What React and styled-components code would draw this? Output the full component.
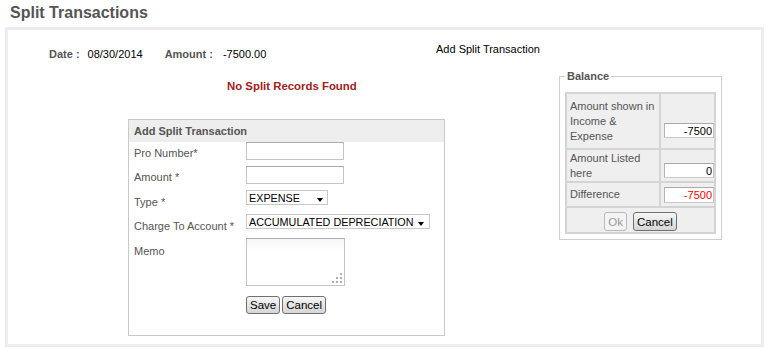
import React from "react";
import styled, { createGlobalStyle } from "styled-components";

const Global = createGlobalStyle`
  html, body { margin: 0; padding: 0; background: #fff; }
  body {
    font-family: "Liberation Sans", Arial, sans-serif;
    font-size: 11px;
    color: #000;
  }
  * { box-sizing: border-box; }
`;

const Page = styled.div`
  width: 767px;
  height: 356px;
  padding: 0 3px 0 5px;
`;

const Title = styled.h1`
  margin: 0 0 5px 0;
  padding: 4px 0 0 5px;
  font-size: 16px;
  line-height: 18px;
  font-weight: bold;
  color: #555;
`;

const Panel = styled.div`
  width: 759px;
  height: 320px;
  border: 3px solid #ededed;
  display: flex;
  flex-direction: column;
`;

const TopRow = styled.div`
  display: flex;
  height: 40px;
`;

const InfoLine = styled.div`
  flex: 0 0 428px;
  padding: 18px 0 0 41px;
  display: flex;
  line-height: 13px;
`;

const InfoLabel = styled.span`
  font-weight: bold;
  color: #555;
  margin-left: ${(p) => p.$gap || 0}px;
`;

const InfoValue = styled.span`
  color: #000;
  margin-left: ${(p) => p.$gap || 0}px;
`;

const AddLink = styled.a`
  margin-top: 13px;
  height: 13px;
  line-height: 13px;
  color: #000;
  text-decoration: none;
  cursor: pointer;
`;

const Body = styled.div`
  display: flex;
  flex: 1;
`;

const Main = styled.div`
  flex: 0 0 551px;
`;

const NoRecords = styled.div`
  margin-top: 10px;
  padding-left: 219px;
  font-weight: bold;
  font-size: 11.4px;
  color: #a02020;
  line-height: 13px;
`;

const FormBox = styled.div`
  margin: 26px 0 0 120px;
  width: 317px;
  height: 217px;
  border: 1px solid #c9c9c9;
`;

const FormHeader = styled.div`
  height: 22px;
  line-height: 22px;
  padding-left: 5px;
  background: #eeeeee;
  font-weight: bold;
  color: #555;
`;

const FormBody = styled.div`
  padding-left: 5px;
`;

const FieldRow = styled.div`
  display: grid;
  grid-template-columns: 112px auto;
  align-items: start;
  height: ${(p) => p.$h}px;
`;

const Label = styled.label`
  color: #555;
  line-height: 13px;
  padding-top: ${(p) => p.$pt || 5}px;
`;

const TextInput = styled.input`
  width: 98px;
  height: ${(p) => p.$h || 18}px;
  border: 1px solid #c4c4c4;
  border-top-color: #aaaaaa;
  background: #fff;
  padding: 0 2px;
  font-family: inherit;
  font-size: 11px;
  outline: none;
`;

const SelectWrap = styled.div`
  position: relative;
  width: ${(p) => p.$w}px;
  height: 15px;
  &::after {
    content: "";
    position: absolute;
    right: ${(p) => p.$arrowRight}px;
    bottom: 3px;
    border-left: 3.5px solid transparent;
    border-right: 3.5px solid transparent;
    border-top: 4px solid #000;
    pointer-events: none;
  }
`;

const Select = styled.select`
  appearance: none;
  -webkit-appearance: none;
  width: 100%;
  height: 15px;
  border: 1px solid #c8c8c8;
  border-radius: 0;
  background: #fff;
  padding: 0 0 0 2px;
  font-family: "Liberation Sans", Arial, sans-serif;
  font-size: 10.8px;
  line-height: 12px;
  color: #000;
  outline: none;
`;

const MemoWrap = styled.div`
  position: relative;
  width: 99px;
  height: 48px;
`;

const Memo = styled.textarea`
  width: 99px;
  height: 48px;
  resize: none;
  border: 1px solid #c4c4c4;
  border-top-color: #aaaaaa;
  background: linear-gradient(#f6f6f6, #fff 12px);
  outline: none;
  font-family: inherit;
`;

const Grip = styled.svg`
  position: absolute;
  right: 2px;
  bottom: 2px;
`;

const ButtonRow = styled.div`
  display: flex;
  gap: 2px;
  padding-left: ${(p) => p.$pl || 0}px;
`;

const Button = styled.button`
  height: ${(p) => p.$h || 18}px;
  padding: 0 3px;
  border: 1px solid ${(p) => (p.disabled ? "#b9b9b9" : "#6f6f6f")};
  border-radius: 3px;
  background: ${(p) =>
    p.disabled ? "#f4f4f4" : "linear-gradient(#f7f7f7, #e2e2e2 60%, #d6d6d6)"};
  color: ${(p) => (p.disabled ? "#9a9a9a" : "#000")};
  font-family: "Liberation Sans", Arial, sans-serif;
  font-size: 11.5px;
  line-height: 14px;
  cursor: pointer;
`;

const Side = styled.div`
  flex: 0 0 163px;
`;

const Fieldset = styled.fieldset`
  margin: 0;
  width: 163px;
  border: 1px solid #cfcfcf;
  padding: 9px 5px 5px 5px;
`;

const Legend = styled.legend`
  padding: 0 2px;
  font-weight: bold;
  color: #555;
  line-height: 13px;
`;

const BalTable = styled.div`
  display: grid;
  grid-template-columns: 92px 53px;
  grid-template-rows: 54px 31px 23px 24px;
  gap: 2px;
  padding: 2px;
  background: #d4d4d4;
`;

const BalLabel = styled.div`
  background: #efefef;
  color: #555;
  padding: 0 3px;
  line-height: 15px;
  display: flex;
  align-items: center;
`;

const BalValueCell = styled.div`
  background: #efefef;
  display: flex;
  align-items: flex-end;
  padding: 0 0 ${(p) => p.$mb}px 3px;
`;

const BalInput = styled.input`
  width: 50px;
  height: ${(p) => p.$h || 15}px;
  border: 1px solid #c9c9c9;
  border-top-color: #a9a9a9;
  border-left-color: #b5b5b5;
  background: #fff;
  text-align: right;
  padding: 0 1px 0 0;
  font-family: "Liberation Sans", Arial, sans-serif;
  font-size: 11px;
  color: ${(p) => (p.$neg ? "#ff0000" : "#000")};
  outline: none;
`;

const BalButtons = styled.div`
  grid-column: 1 / span 2;
  background: #efefef;
  display: flex;
  justify-content: center;
  align-items: flex-start;
  gap: 6px;
  padding-top: 4px;
`;

export default function App() {
  return (
    <>
      <Global />
      <Page>
        <Title>Split Transactions</Title>
        <Panel>
          <TopRow>
            <InfoLine>
              <InfoLabel>Date :</InfoLabel>
              <InfoValue $gap={8}>08/30/2014</InfoValue>
              <InfoLabel $gap={22}>Amount :</InfoLabel>
              <InfoValue $gap={10}>-7500.00</InfoValue>
            </InfoLine>
            <AddLink>Add Split Transaction</AddLink>
          </TopRow>
          <Body>
            <Main>
              <NoRecords>No Split Records Found</NoRecords>
              <FormBox>
                <FormHeader>Add Split Transaction</FormHeader>
                <FormBody>
                  <FieldRow $h={24}>
                    <Label>Pro Number*</Label>
                    <TextInput $h={18} />
                  </FieldRow>
                  <FieldRow $h={24}>
                    <Label>Amount *</Label>
                    <TextInput $h={18} />
                  </FieldRow>
                  <FieldRow $h={24}>
                    <Label $pt={6}>Type *</Label>
                    <SelectWrap $w={82} $arrowRight={5}>
                      <Select defaultValue="EXPENSE">
                        <option>EXPENSE</option>
                        <option>INCOME</option>
                      </Select>
                    </SelectWrap>
                  </FieldRow>
                  <FieldRow $h={24}>
                    <Label $pt={6}>Charge To Account *</Label>
                    <SelectWrap $w={184} $arrowRight={6}>
                      <Select defaultValue="ACCUMULATED DEPRECIATION">
                        <option>ACCUMULATED DEPRECIATION</option>
                      </Select>
                    </SelectWrap>
                  </FieldRow>
                  <FieldRow $h={58}>
                    <Label $pt={7}>Memo</Label>
                    <MemoWrap>
                      <Memo />
                      <Grip width="11" height="11" viewBox="0 0 11 11">
                        <g fill="#b0b0b0">
                          <rect x="8" y="0" width="2" height="2" />
                          <rect x="4" y="4" width="2" height="2" />
                          <rect x="8" y="4" width="2" height="2" />
                          <rect x="0" y="8" width="2" height="2" />
                          <rect x="4" y="8" width="2" height="2" />
                          <rect x="8" y="8" width="2" height="2" />
                        </g>
                      </Grip>
                    </MemoWrap>
                  </FieldRow>
                  <ButtonRow $pl={112}>
                    <Button>Save</Button>
                    <Button>Cancel</Button>
                  </ButtonRow>
                </FormBody>
              </FormBox>
            </Main>
            <Side>
              <Fieldset>
                <Legend>Balance</Legend>
                <BalTable>
                  <BalLabel>
                    Amount shown in
                    <br />
                    Income &amp;
                    <br />
                    Expense
                  </BalLabel>
                  <BalValueCell $mb={10}>
                    <BalInput defaultValue="-7500" />
                  </BalValueCell>
                  <BalLabel>
                    Amount Listed
                    <br />
                    here
                  </BalLabel>
                  <BalValueCell $mb={3}>
                    <BalInput defaultValue="0" />
                  </BalValueCell>
                  <BalLabel>Difference</BalLabel>
                  <BalValueCell $mb={3}>
                    <BalInput $neg $h={16} defaultValue="-7500" />
                  </BalValueCell>
                  <BalButtons>
                    <Button $h={19} disabled>
                      Ok
                    </Button>
                    <Button $h={19}>Cancel</Button>
                  </BalButtons>
                </BalTable>
              </Fieldset>
            </Side>
          </Body>
        </Panel>
      </Page>
    </>
  );
}
